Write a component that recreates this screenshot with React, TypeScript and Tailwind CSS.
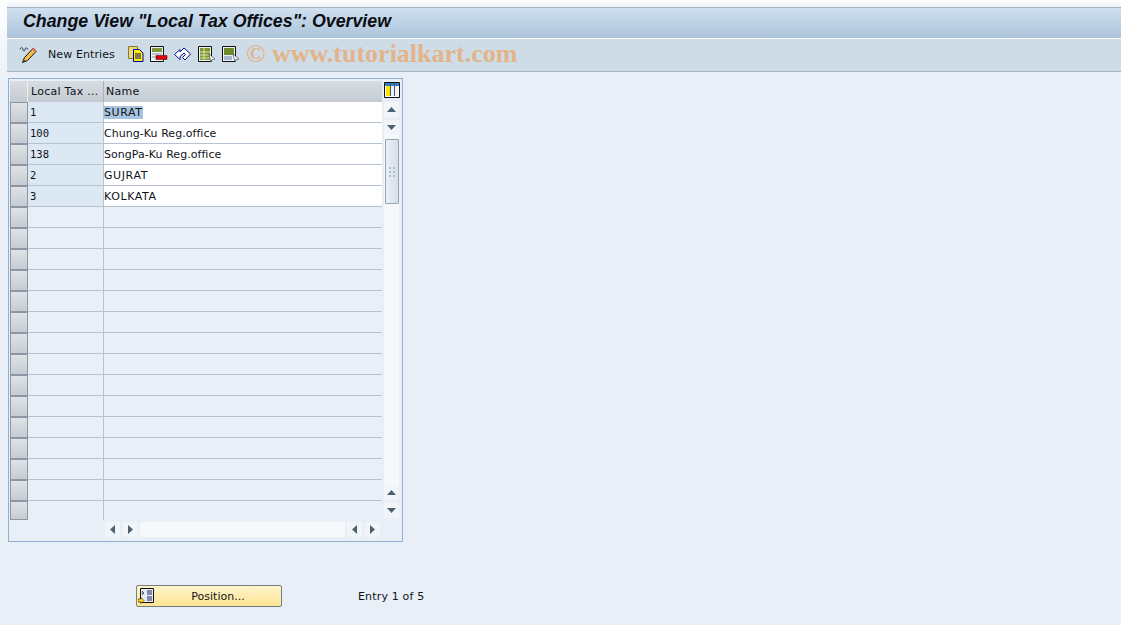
const F = "font-['DejaVu_Sans',sans-serif]";

const rows: [string, string][] = [
  ["1", "SURAT"],
  ["100", "Chung-Ku Reg.office"],
  ["138", "SongPa-Ku Reg.office"],
  ["2", "GUJRAT"],
  ["3", "KOLKATA"],
  ...Array.from({ length: 15 }, (): [string, string] => ["", ""]),
];

function Pencil() {
  return (
    <svg width="18" height="18" viewBox="0 0 18 18">
      <path d="M1 4.500c1-3 3-2 3 0s2 2 2 0 2.500-2 3 0" fill="none" stroke="#333" strokeWidth="1" />
      <path d="M5.500 12.500l-2 5 5-2 8.500-9-3-3z" fill="#f5c04a" stroke="#111" strokeWidth="1" />
      <path d="M13.500 4.500l1.500-1.500 2.500 2.500-1.500 1.500z" fill="#e06a50" />
      <path d="M5 16.500l1.500-.5-1-1z" fill="#111" />
    </svg>
  );
}
function Copy() {
  return (
    <svg width="16" height="16" viewBox="0 0 16 16">
      <path d="M.5 .5h9v12h-9z" fill="#e8d680" stroke="#8a7a30" />
      <path d="M5.500 3.500h6l3.500 3.500v8.500h-9.500z" fill="#fff000" stroke="#0000a0" />
      <path d="M7 8h6M7 10h6M7 12h6" stroke="#0000a0" />
    </svg>
  );
}
function Doc({ kind }: { kind: "del" | "a" | "b" }) {
  return (
    <svg width="18" height="16" viewBox="0 0 18 16">
      <path d="M.5.5h13v15H.5z" fill="#eef1f5" stroke="#111" />
      {kind === "del" ? (
        <>
          <path d="M2 2h10v4H2z" fill="#7f9a3a" />
          <path d="M2 8h10M2 11h6" stroke="#8a94a8" />
          <path d="M6 9.500h11v4H6z" fill="#e00000" stroke="#400" strokeWidth=".5" />
        </>
      ) : kind === "a" ? (
        <>
          <path d="M2 2h10v12H2z" fill="#7c9632" />
          <path d="M2 6h10M2 9h10M2 12h10M6 2v12" stroke="#dbe3b0" />
          <path d="M11 8l6 5-3 .5-1 2.500z" fill="#fff" stroke="#333" strokeWidth=".6" />
        </>
      ) : (
        <>
          <path d="M2 2h10v7H2z" fill="#6f8a2a" />
          <path d="M2 11h8M2 13h8" stroke="#5f7fa8" />
          <path d="M11 8l6 5-3 .5-1 2.500z" fill="#fff" stroke="#333" strokeWidth=".6" />
        </>
      )}
    </svg>
  );
}
function Undo() {
  return (
    <svg width="18" height="16" viewBox="0 0 18 16">
      <path d="M.5 8.500l5.500-5v2.500l4-4 6.500 6-5.500 6-2.500-2.500 3-3-1.500-1.500-4 3.500v3z" fill="#fff" stroke="#10108c" strokeWidth="1" />
    </svg>
  );
}
function LayoutIcon() {
  return (
    <svg width="16" height="16" viewBox="0 0 16 16">
      <path d="M.5.5h15v15H.5z" fill="#fff" stroke="#111" />
      <path d="M1 1h14v3H1z" fill="#2d7fc0" />
      <path d="M2 4h4v10H2z" fill="#ffe000" />
      <path d="M7 4h3v10H7zM11 4h3v10h-3z" fill="#eef1f5" />
      <path d="M10.500 1v13M6.500 1v13" stroke="#44566c" />
    </svg>
  );
}
function PosIcon() {
  return (
    <svg width="16" height="16" viewBox="0 0 16 16">
      <path d="M2.500.5h13v14h-13z" fill="#e8ecf2" stroke="#111" />
      <path d="M9 2h5v11H9z" fill="#7f88b0" />
      <path d="M9 7.500h5" stroke="#eef" />
      <path d="M4 3l2 2-2 2M3.500 5H6" fill="none" stroke="#555" />
      <path d="M0 11h3V9.500l3 3-3 3V14H0z" fill="#ffd800" stroke="#222" strokeWidth=".6" />
    </svg>
  );
}
function Arrow({ dir }: { dir: "up" | "down" | "left" | "right" }) {
  const p = { up: "M0 7 L4.500 2 L9 7z", down: "M0 2 L9 2 L4.500 7z", left: "M7 0 V9 L2 4.500z", right: "M2 0 V9 L7 4.500z" }[dir];
  return (
    <div className="flex h-[15px] w-[15px] items-center justify-center bg-[#f1f5fa]">
      <svg width="9" height="9" viewBox="0 0 9 9"><path d={p} fill="#4d6072" /></svg>
    </div>
  );
}

export default function App() {
  return (
    <div className={`${F} flex h-[625px] w-[1121px] overflow-hidden bg-[#e8eff7] text-[11px] text-[#10141a]`}>
      <div className="h-[90px] w-[7px] shrink-0 bg-gradient-to-b from-white to-[#e8eff7]" />
      <div className="flex min-w-0 flex-1 flex-col">
        <div className="h-[7px] bg-gradient-to-b from-white to-[#edf2f8]" />
        <div className="flex h-[31px] items-center border-t border-[#a9b3c4] bg-gradient-to-b from-[#d0e0ef] to-[#abc3da] pb-[3px] pl-[16px]">
          <span className="font-['Liberation_Sans',sans-serif] text-[17.8px] font-bold italic leading-none text-[#0a0d12]">Change View "Local Tax Offices": Overview</span>
        </div>
        <div className="flex h-[34px] items-center border-y border-t-white border-b-[#a3b3c4] bg-[#cedce8] pb-[3px] pl-[12px]">
          <Pencil />
          <span className="ml-[11px] w-[67px] whitespace-nowrap pt-[2px] leading-none tracking-[0.1px]">New Entries</span>
          <div className="ml-[13px] flex items-center gap-[6px]">
            <Copy />
            <Doc kind="del" />
            <Undo />
            <Doc kind="a" />
            <Doc kind="b" />
          </div>
          <span className="ml-[6px] font-['Liberation_Serif',serif] text-[26px] font-bold leading-none text-[#e3b489]">© www.tutorialkart.com</span>
        </div>
        <div className="ml-px mt-[6px] h-[464px] w-[395px] border border-[#8fb0d0] px-px pt-[2px]">
          <div className="flex">
            <div className="flex flex-col">
              <div className="flex h-[21px] items-center bg-gradient-to-b from-[#d8dde2] to-[#c4cbd2]">
                <div className="h-full w-[18px] border-r border-[#eef1f4]" />
                <div className="flex h-full w-[76px] items-center overflow-hidden border-r border-[#a8b2bd] pl-[3px] pt-[2px]">
                  <span className="whitespace-nowrap tracking-[0.25px]">Local Tax ...</span>
                </div>
                <div className="flex h-full w-[278px] items-center pl-[2px] pt-[2px] tracking-[0.3px]">Name</div>
              </div>
              {rows.map(([a, b], i) => {
                const filled = i < 5;
                const last = i === 19;
                const caps = b === b.toUpperCase();
                return (
                  <div key={i} className={`flex ${last ? "h-[19px]" : "h-[21px]"}`}>
                    <div className="h-full w-[18px] border border-[#8d97a3] bg-gradient-to-b from-[#dfe3e7] to-[#c6ccd2]" />
                    <div className={`h-full w-[76px] border-r border-[#b8c3d0] font-['DejaVu_Sans_Mono',monospace] text-[10.500px] leading-[21px] ${last ? "" : "border-b"} ${filled ? "bg-[#dce8f3]" : ""} border-b-[#b7c2d0]`}>
                      <span className="ml-[2px]">{a}</span>
                    </div>
                    <div className={`h-full w-[278px] leading-[21px] ${last ? "" : "border-b"} border-b-[#b7c2d0] ${filled ? "bg-white" : ""} ${caps ? "tracking-[0.6px]" : "tracking-[0.05px]"}`}>
                      {i === 0 ? <span className="bg-[#a9c4df]">{b}</span> : b}
                    </div>
                  </div>
                );
              })}
            </div>
            <div className="ml-px flex flex-col pl-px">
              <div className="flex h-[21px] items-start pt-px">
                <LayoutIcon />
              </div>
              <div className="flex flex-col gap-[3px]">
                <Arrow dir="up" />
                <Arrow dir="down" />
              </div>
              <div className="h-[350px] w-[15px] bg-[#f6f9fc]">
                <div className="ml-px mt-[4px] flex h-[65px] w-[14px] items-center justify-center rounded-[1px] border border-[#96a5b4] bg-gradient-to-r from-[#eaf0f5] to-[#d5dfe8]">
                  <div className="grid grid-cols-2 gap-[2px]">
                    {[0, 1, 2, 3, 4, 5].map((n) => (
                      <div key={n} className="h-[2px] w-[2px] bg-[#b4c0cb]" />
                    ))}
                  </div>
                </div>
              </div>
              <div className="flex flex-col gap-[3px]">
                <Arrow dir="up" />
                <Arrow dir="down" />
              </div>
            </div>
          </div>
          <div className="ml-[95px] mt-[2px] flex h-[15px] items-center">
            <Arrow dir="left" />
            <div className="ml-[3px]"><Arrow dir="right" /></div>
            <div className="ml-[2px] h-[15px] w-[205px] bg-[#f6f9fc]" />
            <div className="ml-[2px]"><Arrow dir="left" /></div>
            <div className="ml-[3px]"><Arrow dir="right" /></div>
          </div>
        </div>
        <div className="ml-[129px] mt-[43px] flex items-center">
          <div className="relative flex h-[22px] w-[146px] items-center justify-center rounded-[2px] border border-[#777d84] bg-gradient-to-b from-[#fff3cb] to-[#fde591] pl-[18px] pt-[2px]">
            <div className="absolute left-[1px] top-[2px]"><PosIcon /></div>
            <span>Position...</span>
          </div>
          <span className="ml-[76px] pt-[2px] tracking-[0.17px]">Entry 1 of 5</span>
        </div>
      </div>
    </div>
  );
}
